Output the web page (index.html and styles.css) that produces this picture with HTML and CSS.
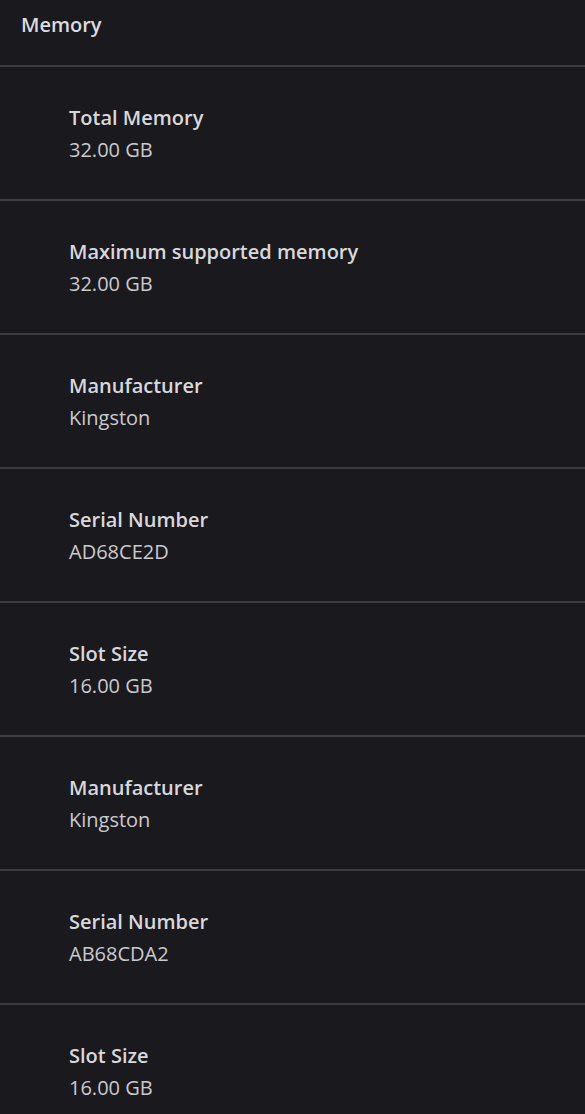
FILE: index.html
```html
<!DOCTYPE html>
<html lang="en">
<head>
    <meta charset="UTF-8">
    <meta name="viewport" content="width=device-width, initial-scale=1.0">
    <title>Memory</title>
    <link rel="stylesheet" href="styles.css">
</head>
<body>
    <div class="panel">
        <div class="panel-header">Memory</div>

        <div class="item">
            <div class="item-label">Total Memory</div>
            <div class="item-value">32.00 GB</div>
        </div>
        <div class="item">
            <div class="item-label">Maximum supported memory</div>
            <div class="item-value">32.00 GB</div>
        </div>
        <div class="item">
            <div class="item-label">Manufacturer</div>
            <div class="item-value">Kingston</div>
        </div>
        <div class="item">
            <div class="item-label">Serial Number</div>
            <div class="item-value">AD68CE2D</div>
        </div>
        <div class="item">
            <div class="item-label">Slot Size</div>
            <div class="item-value">16.00 GB</div>
        </div>
        <div class="item">
            <div class="item-label">Manufacturer</div>
            <div class="item-value">Kingston</div>
        </div>
        <div class="item">
            <div class="item-label">Serial Number</div>
            <div class="item-value">AB68CDA2</div>
        </div>
        <div class="item">
            <div class="item-label">Slot Size</div>
            <div class="item-value">16.00 GB</div>
        </div>
    </div>
</body>
</html>
```

FILE: styles.css
```css
body {
    margin: 0;
    background-color: #1a191e;
    font-family: "Open Sans", "Noto Sans", sans-serif;
    color: #d4d4d8;
}

.panel {
    width: 100%;
}

.panel-header {
    height: 67px;
    box-sizing: border-box;
    padding: 11px 21px 0;
    font-size: 20px;
    line-height: 28px;
    font-weight: 600;
    color: #dcdce0;
    border-bottom: 2px solid #3c3b41;
}

.item {
    height: 134px;
    box-sizing: border-box;
    padding: 35px 69px 0;
    border-bottom: 2px solid #3c3b41;
}

.item-label {
    font-size: 20px;
    font-weight: 600;
    line-height: 32px;
    color: #d8d8dc;
}

.item-value {
    font-size: 20px;
    line-height: 32px;
    color: #cacace;
}
```
